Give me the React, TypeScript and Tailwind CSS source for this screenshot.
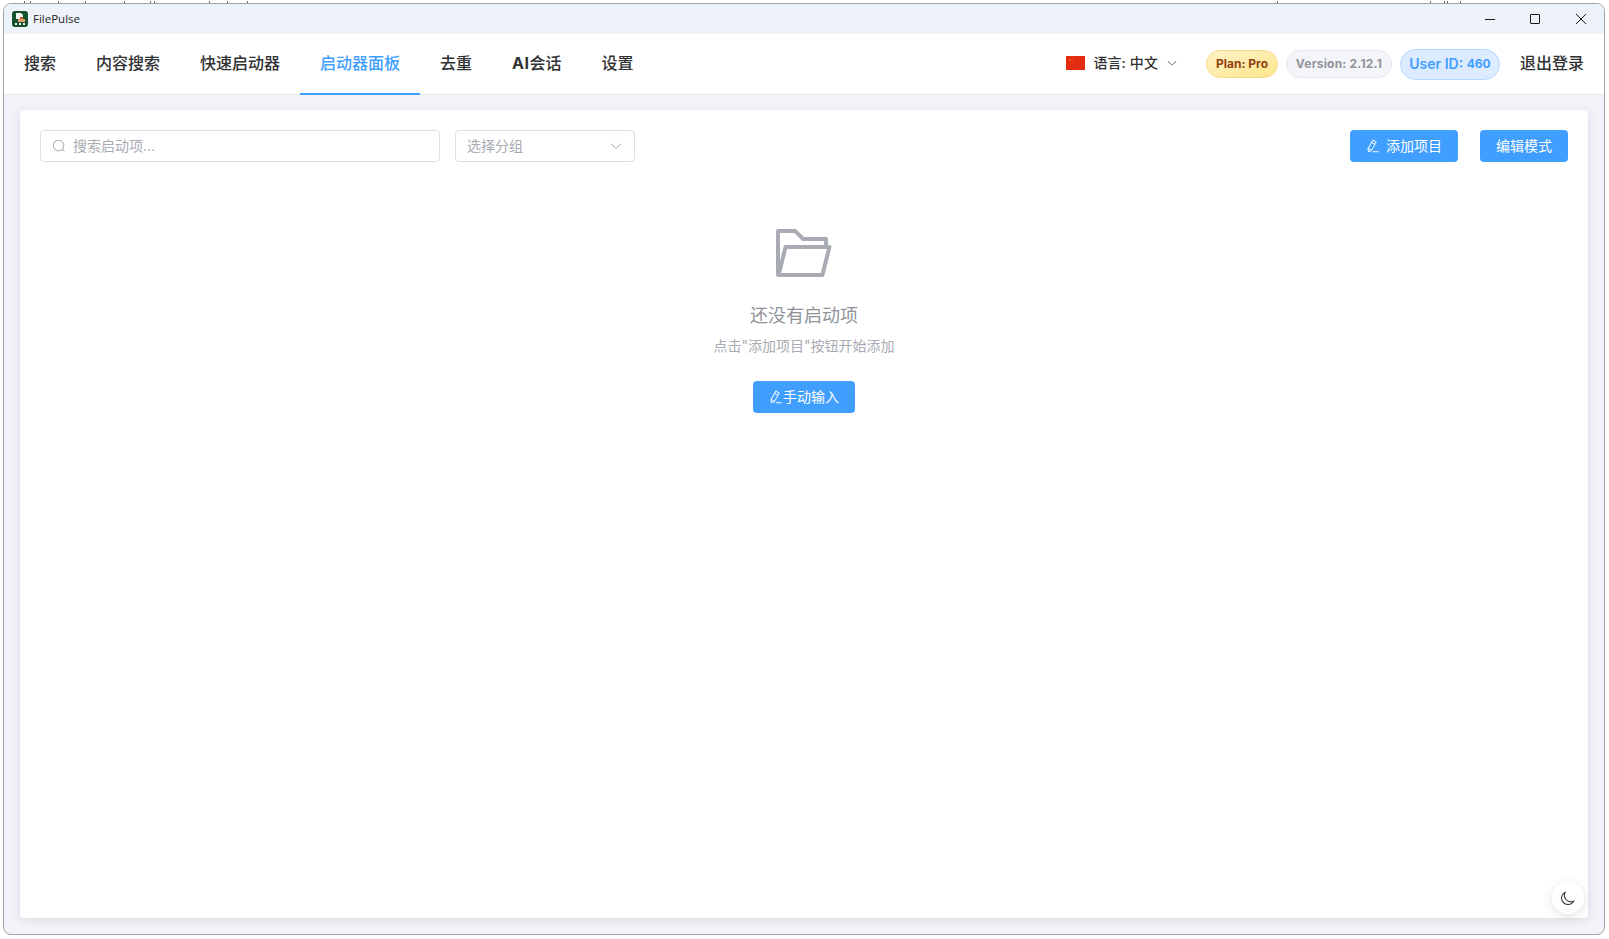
const P = {
  search: "m795.904 750.72 124.992 124.928a32 32 0 0 1-45.248 45.248L750.656 795.904a416 416 0 1 1 45.248-45.248zM480 832a352 352 0 1 0 0-704 352 352 0 0 0 0 704z",
  arrow: "M831.872 340.864 512 652.672 192.128 340.864a30.592 30.592 0 0 0-42.752 0 29.12 29.12 0 0 0 0 41.6L489.664 714.24a32 32 0 0 0 44.672 0l340.288-331.712a29.12 29.12 0 0 0 0-41.6 30.592 30.592 0 0 0-42.752 0z",
  pen: "m199.04 672.64 193.984 112 224-387.968-193.92-112-224 388.032zm-23.872 60.16 32.896 148.288 144.896-45.696L175.168 732.8zM455.04 229.248l193.92 112 56.704-98.112-193.984-112-56.64 98.112zM104.32 708.8l384-665.024 304.768 175.936L409.152 884.8h.064l-248.448 78.336L104.32 708.8zm384 254.272v-64h448v64h-448z",
  folder: "M878.08 448H241.92l-96 384h636.16l96-384zM832 384v-64H485.76L357.504 192H128v448l57.92-231.744A32 32 0 0 1 216.96 384H832zm-24.96 512H96a32 32 0 0 1-32-32V160a32 32 0 0 1 32-32h287.872l128.384 128H864a32 32 0 0 1 32 32v96h23.04a32 32 0 0 1 31.04 39.744l-112 448A32 32 0 0 1 807.04 896z",
  moon: "M240.448 240.448a384 384 0 1 0 559.424 525.696 448 448 0 0 1-542.016-542.08 390.592 390.592 0 0 0-17.408 16.384zm181.056 362.048a384 384 0 0 0 525.632 16.384A448 448 0 1 1 405.056 76.8a384 384 0 0 0 16.448 525.696z",
};

function Icon({ d, className }: { d: string; className: string }) {
  return (
    <svg viewBox="0 0 1024 1024" fill="currentColor" className={className}>
      <path d={d} />
    </svg>
  );
}

function Logo() {
  return (
    <svg viewBox="0 0 16 16" className="w-4 h-4 shrink-0">
      <rect width="16" height="16" rx="3" fill="#14532d" />
      <path d="M4 2h5l2 2v4H4z" fill="#f1f5f0" />
      <rect x="6" y="8" width="7" height="3" fill="#e8a06a" />
      <rect x="8" y="6" width="3" height="2" fill="#c2562c" />
      <rect x="3" y="12" width="2" height="2" fill="#f1f5f0" />
      <rect x="7" y="12" width="2" height="2" fill="#f1f5f0" />
      <rect x="11" y="12" width="2" height="2" fill="#f1f5f0" />
    </svg>
  );
}

function Flag() {
  return (
    <svg viewBox="0 0 19 14" className="mb-[2px] h-[14px] w-[19px] shrink-0">
      <rect width="19" height="14" fill="#e32b12" />
      <rect x="3" y="3" width="2" height="2" fill="#eb5a14" />
      <rect x="6" y="1" width="1" height="1" fill="#eb5a14" />
      <rect x="7" y="3" width="1" height="1" fill="#eb5a14" />
      <rect x="7" y="5" width="1" height="1" fill="#eb5a14" />
      <rect x="6" y="7" width="1" height="1" fill="#eb5a14" />
    </svg>
  );
}

const tabs = ["搜索", "内容搜索", "快速启动器", "启动器面板", "去重", "AI会话", "设置"];
// bits of the window behind that show above the top edge
const specks = [24, 30, 58, 85, 124, 150, 154, 209, 227, 247, 1277, 1430, 1444, 1447, 1460];

export default function App() {
  return (
    <div className="relative h-[939px] w-[1609px] overflow-hidden bg-white p-[3px] pr-[4px] pb-[4px] font-['Inter','Noto_Sans_CJK_SC',sans-serif]">
      <svg viewBox="0 0 1609 3" className="absolute left-0 top-0 h-[3px] w-[1609px]">
        {specks.map((x) => (
          <rect key={x} x={x} y={1} width={1} height={2} fill="#666" />
        ))}
      </svg>
      <div className="flex h-full flex-col overflow-hidden rounded-lg border border-[#a3a3a3] bg-[#f3f4f9]">
        <div className="flex h-[30px] shrink-0 items-center bg-[#eef2f9] pl-[8px]">
          <Logo />
          <span className="ml-[5px] font-['Open_Sans',sans-serif] text-[11.5px] text-[#1f1f1f]">FilePulse</span>
          <div className="ml-auto flex items-center text-[#1a1a1a]">
            <div className="flex w-[44px] justify-center">
              <div className="h-px w-[10px] bg-current" />
            </div>
            <div className="flex w-[46px] justify-center">
              <div className="h-[10px] w-[10px] rounded-[1px] border border-current" />
            </div>
            <div className="flex w-[46px] justify-center">
              <svg viewBox="0 0 10 10" className="h-[10px] w-[10px]" stroke="currentColor" fill="none">
                <path d="M0 0l10 10M10 0L0 10" />
              </svg>
            </div>
          </div>
        </div>

        <div className="flex h-[61px] shrink-0 items-stretch border-b border-[#e4e7ed] bg-white">
          {tabs.map((t, i) => (
            <div
              key={t}
              className={
                i === 3
                  ? "flex items-center border-b-2 border-[#409eff] px-5 pb-[2px] text-base font-medium text-[#409eff] -mb-px"
                  : "flex items-center border-b-2 border-transparent px-5 pb-[2px] text-base font-medium text-[#303133] -mb-px"
              }
            >
              {t === "AI会话" ? (
                <>
                  <span className="font-bold tracking-[0.5px]">AI</span>会话
                </>
              ) : (
                t
              )}
            </div>
          ))}
          <div className="ml-auto flex items-center pr-[20px]">
            <Flag />
            <span className="mb-[2px] ml-2 text-sm font-medium tracking-[0.1px] text-[#303133]">语言: 中文</span>
            <Icon d={P.arrow} className="mb-[2px] ml-2 h-3 w-3 text-[#606266]" />
            <span className="ml-[28px] flex h-[28px] w-[72px] items-center justify-center rounded-full border border-[#f5d78e] bg-gradient-to-br from-[#fef3c7] to-[#fde68a] text-xs font-bold text-[#92400e]">Plan: Pro</span>
            <span className="ml-2 flex h-[28px] w-[106px] items-center justify-center rounded-full border border-[#e4e7ed] bg-[#f4f5f9] text-xs font-bold tracking-[0.2px] text-[#909399]">Version: 2.12.1</span>
            <span className="ml-2 flex h-[31px] w-[100px] items-center justify-center rounded-full border border-[#b3d8ff] bg-[#dcebff] text-sm font-semibold text-[#409eff]">
              User ID:&nbsp;<span className="text-xs font-bold">460</span>
            </span>
            <span className="mb-[2px] ml-5 text-base font-medium text-[#303133]">退出登录</span>
          </div>
        </div>

        <div className="flex min-h-0 flex-1 px-4 pt-[15px] pb-4">
          <div className="relative flex-1 rounded bg-white px-5 py-5 shadow-[0_2px_12px_rgba(0,0,0,0.1)]">
            <div className="flex items-center">
              <div className="flex h-8 w-[400px] items-center rounded border border-[#dcdfe6] px-[11px] text-[#a8abb2]">
                <Icon d={P.search} className="h-[14px] w-[14px]" />
                <span className="ml-[7px] text-sm">搜索启动项...</span>
              </div>
              <div className="ml-[15px] flex h-8 w-[180px] items-center justify-between rounded border border-[#dcdfe6] px-[11px] text-[#a8abb2]">
                <span className="text-sm">选择分组</span>
                <Icon d={P.arrow} className="h-[14px] w-[14px]" />
              </div>
              <button className="ml-auto flex h-8 w-[108px] items-center justify-center rounded bg-[#409eff] text-sm text-white">
                <Icon d={P.pen} className="mr-[6px] h-[14px] w-[14px]" />
                添加项目
              </button>
              <button className="ml-[22px] flex h-8 w-[88px] items-center justify-center rounded bg-[#409eff] text-sm text-white">
                编辑模式
              </button>
            </div>

            <div className="mt-[59px] flex flex-col items-center">
              <Icon d={P.folder} className="h-16 w-16 text-[#a8abb2]" />
              <p className="mt-[18px] text-lg leading-[26px] text-[#909399]">还没有启动项</p>
              <p className="mt-[7px] text-sm leading-5 text-[#a8abb2]">点击"添加项目"按钮开始添加</p>
              <button className="mt-[25px] flex h-8 w-[102px] items-center justify-center rounded bg-[#409eff] text-sm text-white">
                <Icon d={P.pen} className="h-[14px] w-[14px]" />
                手动输入
              </button>
            </div>

            <div className="absolute bottom-[4px] right-[4px] flex h-8 w-8 items-center justify-center rounded-full bg-white shadow-[0_2px_10px_rgba(0,0,0,0.12)]">
              <Icon d={P.moon} className="h-4 w-4 text-[#303133]" />
            </div>
          </div>
        </div>
      </div>
    </div>
  );
}
